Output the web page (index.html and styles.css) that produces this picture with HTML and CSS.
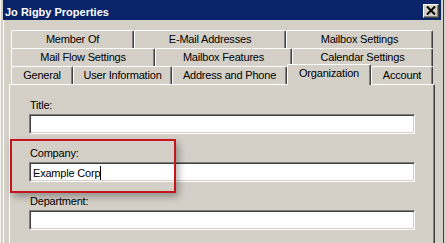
FILE: index.html
```html
<!DOCTYPE html>
<html>
<head>
<meta charset="utf-8">
<link rel="stylesheet" href="styles.css">
</head>
<body>
<div class="screen">
  <div class="window">
    <div class="titlebar">
      <span class="title">Jo Rigby Properties</span>
      <div class="close">
        <svg width="10" height="9" viewBox="0 0 10 9"><path d="M1 0.5 L9 8.5 M9 0.5 L1 8.5" stroke="#000" stroke-width="2" fill="none"/></svg>
      </div>
    </div>
    <div class="content">
      <div class="tabs">
        <div class="tabrow row1">
          <div class="tab">Member Of</div>
          <div class="tab">E-Mail Addresses</div>
          <div class="tab">Mailbox Settings</div>
        </div>
        <div class="tabrow row2">
          <div class="tab">Mail Flow Settings</div>
          <div class="tab">Mailbox Features</div>
          <div class="tab">Calendar Settings</div>
        </div>
        <div class="tabrow row3">
          <div class="tab">General</div>
          <div class="tab">User Information</div>
          <div class="tab">Address and Phone</div>
          <div class="tab active">Organization</div>
          <div class="tab">Account</div>
        </div>
      </div>
      <div class="panel">
        <div class="field">
          <div class="label">Title:</div>
          <div class="input"></div>
        </div>
        <div class="field">
          <div class="label">Company:</div>
          <div class="input"><span class="value">Example Corp</span><span class="caret"></span></div>
        </div>
        <div class="field">
          <div class="label">Department:</div>
          <div class="input"></div>
        </div>
      </div>
    </div>
  </div>
  <div class="behind"></div>
  <div class="highlight"></div>
</div>
</body>
</html>
```
FILE: styles.css
```css
html, body {
  margin: 0;
  padding: 0;
  background: #d4d0c8;
}
.screen {
  position: relative;
  width: 446px;
  height: 243px;
  overflow: hidden;
  display: flex;
  font-family: "Liberation Sans", Arial, sans-serif;
  font-size: 11px;
  color: #000;
}
.window {
  width: 438px;
  height: 243px;
  flex: none;
  display: flex;
  flex-direction: column;
  border-left: 1px solid #f4f3f0;
  padding-left: 2px;
  padding-right: 2px;
  border-right: 1px solid #404040;
  box-sizing: content-box;
  background: #d4d0c8;
}
.titlebar {
  height: 20px;
  flex: none;
  background: #0a246a;
  display: flex;
  justify-content: space-between;
  align-items: flex-start;
}
.title {
  color: #fff;
  font-weight: bold;
  font-size: 11px;
  line-height: 13px;
  padding-top: 6px;
  padding-left: 2px;
}
.close {
  width: 16px;
  height: 14px;
  box-sizing: border-box;
  margin-top: 4px;
  margin-right: 2px;
  background: #d4d0c8;
  border-top: 1px solid #fff;
  border-left: 1px solid #fff;
  border-right: 1px solid #404040;
  border-bottom: 1px solid #404040;
  box-shadow: inset -1px -1px #808080;
  display: flex;
  align-items: center;
  justify-content: center;
  padding-right: 1px;
  padding-bottom: 1px;
}
.close svg { display: block; }
.content {
  flex: 1;
  border-left: 1px solid #fff;
  padding-top: 10px;
}
.tabs {
  margin-left: 7px;
  width: 422px;
}
.tabrow {
  display: grid;
  height: 18px;
}
.row1 { grid-template-columns: 123px 152px 147px; }
.row2 { grid-template-columns: 144px 137px 141px; }
.row3 { grid-template-columns: 62px 99px 115px 84px 62px; }
.tab {
  box-sizing: border-box;
  height: 18px;
  line-height: 17px;
  text-align: center;
  letter-spacing: -0.2px;
  border-top: 1px solid #fff;
  border-left: 1px solid #fff;
  border-right: 1px solid #404040;
  box-shadow: inset -1px 0 #808080;
  border-radius: 2px 2px 0 0;
  background: #d4d0c8;
  white-space: nowrap;
  overflow: hidden;
}
.tab.active {
  position: relative;
  z-index: 2;
  margin-top: -2px;
  height: 21px;
  line-height: 17px;
}
.panel {
  margin-left: 5px;
  width: 426px;
  height: 200px;
  box-sizing: border-box;
  border-top: 1px solid #fff;
  border-left: 1px solid #fff;
  border-right: 1px solid #404040;
  box-shadow: inset -1px 0 #808080;
  padding: 14px 0 0 19px;
  display: flex;
  flex-direction: column;
  gap: 13px;
}
.field {
  display: flex;
  flex-direction: column;
  gap: 2px;
}
.label {
  line-height: 13px;
  padding-left: 1px;
  letter-spacing: -0.2px;
}
.input {
  width: 386px;
  height: 20px;
  box-sizing: border-box;
  background: #fff;
  border-top: 1px solid #808080;
  border-left: 1px solid #808080;
  border-right: 1px solid #fff;
  border-bottom: 1px solid #fff;
  box-shadow: inset 1px 1px #404040, inset -1px -1px #d4d0c8;
  padding: 1px 0 0 3px;
  line-height: 16px;
  display: flex;
  align-items: center;
}
.value {
  letter-spacing: -0.2px;
}
.caret {
  width: 1px;
  height: 14px;
  background: #000;
}
.behind {
  flex: 1;
  background: #d4d0c8;
}
.highlight {
  position: absolute;
  left: 10px;
  top: 139px;
  width: 166px;
  height: 54px;
  box-sizing: border-box;
  border: 2px solid #c4161c;
  box-shadow: 3px 4px 7px rgba(0, 0, 0, 0.3);
}
```
